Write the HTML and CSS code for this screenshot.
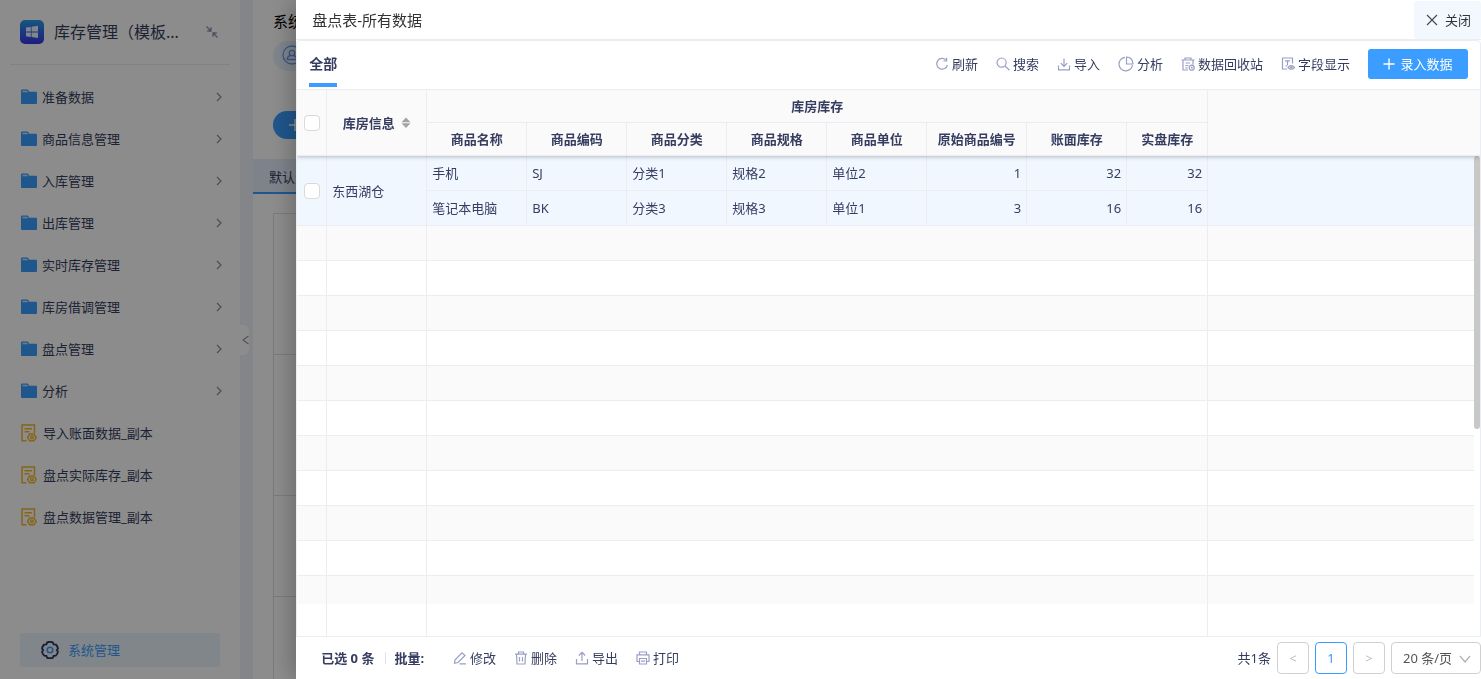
FILE: index.html
```html
<!DOCTYPE html>
<html lang="zh-CN">
<head>
<meta charset="utf-8">
<title>库存管理</title>
<link rel="stylesheet" href="styles.css">
</head>
<body>
<svg class="sprite" aria-hidden="true">
  <symbol id="folder" viewBox="0 0 16 16"><path d="M0 1.5Q0 0.5 1 0.5H6.6L8.4 2.8H15Q16 2.8 16 3.8V14Q16 15 15 15H1Q0 15 0 14Z" fill="#3a9dff"/><path d="M1.5 3.3V1.8H6L7.2 3.3Z" fill="#fff" opacity=".75"/></symbol>
  <symbol id="arrow" viewBox="0 0 8 10"><path d="M2 1L6 5L2 9" fill="none" stroke="#898ea5" stroke-width="1.2"/></symbol>
  <symbol id="doc" viewBox="0 0 16 18"><g fill="none" stroke="#f4b92c" stroke-width="1.5"><path d="M5.5 16.8H1V1H13.5V9"/><path d="M3.5 4.8H11M3.5 7.8H8.5"/><path d="M8.6 10H13L15.2 13.4L13 16.8H8.6L6.6 13.4Z"/><circle cx="10.9" cy="13.4" r="1.3"/></g></symbol>
</svg>
<div class="app">
  <aside class="sidebar">
    <header class="brand">
      <svg class="logo" viewBox="0 0 24 24"><defs><linearGradient id="g" x1="0" y1="0" x2="0" y2="1"><stop offset="0" stop-color="#279fe6"/><stop offset="1" stop-color="#3a33e8"/></linearGradient></defs><rect width="24" height="24" rx="5" fill="url(#g)"/><path d="M6 7.6L10.8 6.9V11.5H6ZM11.6 6.8L18 5.8V11.5H11.6ZM6 12.4H10.8V17L6 16.3ZM11.6 12.4H18V18L11.6 17.1Z" fill="#eef2ff"/></svg>
      <h1>库存管理（模板...</h1>
      <svg class="shrink" viewBox="0 0 12 12"><g fill="none" stroke="#8f93ac" stroke-width="1.3"><path d="M0.5 0.5L5 5M5 1.2V5H1.2M11.5 11.5L7 7M7 10.8V7H10.8"/></g></svg>
    </header>
    <nav class="menu">
      <a href="#"><svg class="folder"><use href="#folder"/></svg><span>准备数据</span><svg class="arrow"><use href="#arrow"/></svg></a>
      <a href="#"><svg class="folder"><use href="#folder"/></svg><span>商品信息管理</span><svg class="arrow"><use href="#arrow"/></svg></a>
      <a href="#"><svg class="folder"><use href="#folder"/></svg><span>入库管理</span><svg class="arrow"><use href="#arrow"/></svg></a>
      <a href="#"><svg class="folder"><use href="#folder"/></svg><span>出库管理</span><svg class="arrow"><use href="#arrow"/></svg></a>
      <a href="#"><svg class="folder"><use href="#folder"/></svg><span>实时库存管理</span><svg class="arrow"><use href="#arrow"/></svg></a>
      <a href="#"><svg class="folder"><use href="#folder"/></svg><span>库房借调管理</span><svg class="arrow"><use href="#arrow"/></svg></a>
      <a href="#"><svg class="folder"><use href="#folder"/></svg><span>盘点管理</span><svg class="arrow"><use href="#arrow"/></svg></a>
      <a href="#"><svg class="folder"><use href="#folder"/></svg><span>分析</span><svg class="arrow"><use href="#arrow"/></svg></a>
      <a href="#"><svg class="doc"><use href="#doc"/></svg><span>导入账面数据_副本</span></a>
      <a href="#"><svg class="doc"><use href="#doc"/></svg><span>盘点实际库存_副本</span></a>
      <a href="#"><svg class="doc"><use href="#doc"/></svg><span>盘点数据管理_副本</span></a>
    </nav>
    <a class="system" href="#"><svg viewBox="0 0 18 18"><path d="M6.2 1.3Q9 0.4 11.8 1.3L12.6 3.3L14.9 3.5Q16.6 5.2 17 7.6L15.8 9L17 10.6Q16.5 13 14.8 14.6L12.6 14.8L11.8 16.8Q9 17.6 6.2 16.8L5.4 14.8L3.2 14.6Q1.5 13 1 10.6L2.2 9L1 7.6Q1.4 5.2 3.1 3.5L5.4 3.3Z" fill="none" stroke="#303658" stroke-width="1.8"/><circle cx="9" cy="9" r="2.8" fill="none" stroke="#3a9dff" stroke-width="1.6"/></svg>系统管理</a>
  </aside>
  <div class="gutter"><button class="collapse" aria-label="收起"><svg viewBox="0 0 7 10"><path d="M6.5 1L1 5L6.5 9" fill="none" stroke="#999" stroke-width="1.2"/></svg></button></div>
  <main class="page">
    <div class="page-head">
      <h2>系统</h2>
      <div class="user"><svg viewBox="0 0 20 20"><g fill="none" stroke="#6a9df0" stroke-width="1.3"><circle cx="10" cy="10" r="9"/><circle cx="10" cy="8" r="2.7"/><path d="M5 14.5Q5.5 11 8.5 10.5M15 14.5Q14.5 11 11.5 10.5M5 14.5H15"/></g></svg></div>
      <button class="add" aria-label="新增"><svg viewBox="0 0 12 12"><path d="M0 6H12M6 0V12" stroke="#fff" stroke-width="1.5"/></svg></button>
    </div>
    <div class="page-tab">默认分</div>
    <div class="cards"><i></i><i></i><i class="short"></i><i></i></div>
  </main>
</div>
<div class="mask"></div>

<section class="drawer" role="dialog" aria-label="盘点表-所有数据">
  <header class="drawer-head">
    <h2>盘点表-所有数据</h2>
    <button class="close"><svg viewBox="0 0 12 12"><path d="M1 1L11 11M11 1L1 11" stroke="#444" stroke-width="1.1"/></svg>关闭</button>
  </header>
  <div class="panel">
    <div class="toolbar">
      <button class="tab">全部</button>
      <div class="tools">
        <button><svg viewBox="0 0 14 14"><path d="M10.8 2.8A5.4 5.4 0 1 0 12.4 8M11.6 0.8V4H8.4"/></svg>刷新</button>
        <button><svg viewBox="0 0 14 14"><circle cx="5.6" cy="5.6" r="4.6"/><path d="M9 9L13.5 13.3"/></svg>搜索</button>
        <button><svg viewBox="0 0 14 14"><path d="M7 1.5V9M3.8 6.2L7 9.4L10.2 6.2M1.5 8.5V12.8H12.5V8.5"/></svg>导入</button>
        <button><svg class="i16" viewBox="0 0 16 16"><path d="M7 1.3A6.8 6.8 0 1 0 14.5 9"/><path d="M8.5 1H9A6 6 0 0 1 14.8 6.8V8H8.5Z"/></svg>分析</button>
        <button><svg viewBox="0 0 14 14"><path d="M0.5 3H13.5M4 3V1H10V3M2 3V13H7M12 3V7.5M4.5 6H9M4.5 8.5H7.5M4.5 10.8H6.5"/><circle cx="10.7" cy="10.7" r="2.5"/><path d="M10.7 9.6V10.8H11.8"/></svg>数据回收站</button>
        <button><svg viewBox="0 0 14 14"><path d="M6 12H1.5V1H11.5V6.5M4 3.8H9M6.5 3.8V8.5M4.5 9H6"/><path d="M7 10.5Q10.3 6.8 13.5 10.5Q10.3 14 7 10.5Z"/><circle cx="10.3" cy="10.5" r="0.7"/></svg>字段显示</button>
      </div>
      <button class="primary"><svg viewBox="0 0 12 12"><path d="M0.5 6H11.5M6 0.5V11.5"/></svg>录入数据</button>
    </div>
    <div class="grid">
      <table>
        <colgroup><col class="c-check"><col class="c"><col class="c"><col class="c"><col class="c"><col class="c"><col class="c"><col class="c"><col class="c"><col class="c-last"><col><col class="c-bar"></colgroup>
        <thead>
          <tr><th rowspan="2"><input type="checkbox" aria-label="全选"></th><th rowspan="2"><span class="sort">库房信息<svg viewBox="0 0 10 12"><path d="M5 0.5L9.5 5.2H0.5ZM5 11L9.5 6.3H0.5Z" fill="#a3a3a3"/></svg></span></th><th colspan="8">库房库存</th><th rowspan="2" colspan="2" class="blank"></th></tr>
          <tr><th>商品名称</th><th>商品编码</th><th>商品分类</th><th>商品规格</th><th>商品单位</th><th>原始商品编号</th><th>账面库存</th><th>实盘库存</th></tr>
        </thead>
        <tbody>
          <tr class="data"><td rowspan="2" class="center"><input type="checkbox" aria-label="选择 东西湖仓"></td><td rowspan="2">东西湖仓</td><td>手机</td><td>SJ</td><td>分类1</td><td>规格2</td><td>单位2</td><td class="num">1</td><td class="num">32</td><td class="num">32</td><td rowspan="2" class="blank"></td><td rowspan="2" class="bar"></td></tr>
          <tr class="data"><td>笔记本电脑</td><td>BK</td><td>分类3</td><td>规格3</td><td>单位1</td><td class="num">3</td><td class="num">16</td><td class="num">16</td></tr>
          <tr class="odd"><td></td><td></td><td colspan="8"></td><td class="blank"></td><td class="bar"></td></tr>
          <tr><td></td><td></td><td colspan="8"></td><td class="blank"></td><td class="bar"></td></tr>
          <tr class="odd"><td></td><td></td><td colspan="8"></td><td class="blank"></td><td class="bar"></td></tr>
          <tr><td></td><td></td><td colspan="8"></td><td class="blank"></td><td class="bar"></td></tr>
          <tr class="odd"><td></td><td></td><td colspan="8"></td><td class="blank"></td><td class="bar"></td></tr>
          <tr><td></td><td></td><td colspan="8"></td><td class="blank"></td><td class="bar"></td></tr>
          <tr class="odd"><td></td><td></td><td colspan="8"></td><td class="blank"></td><td class="bar"></td></tr>
          <tr><td></td><td></td><td colspan="8"></td><td class="blank"></td><td class="bar"></td></tr>
          <tr class="odd"><td></td><td></td><td colspan="8"></td><td class="blank"></td><td class="bar"></td></tr>
          <tr><td></td><td></td><td colspan="8"></td><td class="blank"></td><td class="bar"></td></tr>
          <tr class="odd partial"><td></td><td></td><td colspan="8"></td><td class="blank"></td><td class="bar"></td></tr>
          <tr class="rest"><td></td><td></td><td colspan="8"></td><td class="blank"></td><td class="bar"></td></tr>
        </tbody>
      </table>
      <div class="thumb"></div>
    </div>
  </div>
  <footer class="drawer-foot">
    <strong class="picked">已选 0 条</strong>
    <strong class="batch">批量:</strong>
    <div class="tools">
      <button><svg viewBox="0 0 14 14"><path d="M2 9L9 1.8L12 4.5L5 11.5L1.5 12.3ZM6.5 12.8H13"/></svg>修改</button>
      <button><svg viewBox="0 0 14 14"><path d="M1 3.2H13M4.5 3V1H9.5V3M2.5 3.2L3 13H11L11.5 3.2M5.5 6V10.5M8.5 6V10.5"/></svg>删除</button>
      <button><svg viewBox="0 0 14 14"><path d="M7 10V1.5M3.8 4.5L7 1.3L10.2 4.5M1.5 8V12.8H12.5V8"/></svg>导出</button>
      <button><svg viewBox="0 0 14 14"><path d="M3.5 3.8V1H10.5V3.8M3.5 10.5H1V3.8H13V10.5H10.5M3.5 7.5H10.5V13H3.5ZM5 10.2H9"/></svg>打印</button>
    </div>
    <div class="pager">
      <span>共1条</span>
      <button disabled>&lt;</button>
      <button class="on">1</button>
      <button disabled>&gt;</button>
      <div class="size"><select aria-label="每页条数"><option>20 条/页</option></select><svg viewBox="0 0 12 8"><path d="M1 1L6 7L11 1" fill="none" stroke="#b0b0b0" stroke-width="1.2"/></svg></div>
    </div>
  </footer>
</section>
</body>
</html>
```
FILE: styles.css
```css
* { box-sizing: border-box; }
body {
  margin: 0;
  height: 100vh;
  overflow: hidden;
  font: 13px/20px "Noto Sans", "Noto Sans CJK SC", sans-serif;
  color: #363d60;
}
h1, h2 { margin: 0; font-weight: 400; }
a { color: inherit; text-decoration: none; }
button {
  font: inherit;
  color: inherit;
  border: 0;
  padding: 0;
  background: none;
}
svg { display: block; flex: none; }
.sprite { position: absolute; width: 0; height: 0; }

/* Background application */
.app { display: flex; height: 100%; background: #fff; }
.sidebar { width: 240px; flex: none; display: flex; flex-direction: column; }
.brand {
  display: flex;
  align-items: center;
  margin: 0 10px;
  padding: 0 10px;
  height: 65px;
  border-bottom: 1px solid #ebedf2;
}
.brand h1 { font-size: 16px; margin-left: 10px; flex: 1; white-space: nowrap; }
.logo { width: 24px; height: 24px; }
.shrink { width: 12px; height: 12px; margin-right: 2px; }
.menu { flex: 1; padding-top: 11px; }
.menu a { display: flex; align-items: center; height: 42px; padding: 0 17px 0 21px; }
.menu span { flex: 1; }
.folder { width: 16px; height: 16px; margin-right: 5px; }
.doc { width: 16px; height: 18px; margin-right: 6px; }
.arrow { width: 8px; height: 10px; }
.system {
  display: flex;
  align-items: center;
  gap: 9px;
  height: 34px;
  margin: 0 20px 12px;
  padding-left: 21px;
  border-radius: 3px;
  background: #ebf5fe;
  color: #3a9dff;
}
.system svg { width: 18px; height: 18px; }
.gutter {
  flex: none;
  width: 13px;
  display: flex;
  align-items: center;
  background: #eff2fa;
}
.collapse {
  width: 9px;
  height: 30px;
  background: #fff;
  border-radius: 0 6px 6px 0;
  display: flex;
  align-items: center;
  justify-content: flex-end;
}
.collapse svg { width: 7px; height: 10px; }
.page { flex: 1; min-width: 0; overflow: hidden; }
.page-head { padding: 10px 20px 0; }
.page-head h2 { font-size: 15px; line-height: 22px; color: #000; }
.user {
  width: 160px;
  height: 30px;
  margin-top: 9px;
  padding: 4px 9px;
  border-radius: 15px;
  background: #e8f2fe;
}
.user svg { width: 20px; height: 20px; }
.add {
  display: flex;
  align-items: center;
  width: 110px;
  height: 28px;
  margin: 40px 0 20px;
  padding-left: 16px;
  border-radius: 14px;
  background: #3a9dff;
}
.add svg { width: 12px; height: 12px; }
.page-tab {
  height: 35px;
  padding: 8px 16px;
  background: #e6effd;
  border-bottom: 2px solid #3a9dff;
}
.cards { margin: 19px 0 0 20px; border: 1px solid #e0e0e0; }
.cards i { display: block; height: 141px; border-bottom: 1px solid #e0e0e0; }
.cards .short { height: 101px; }
.mask { position: fixed; inset: 0; background: rgba(0, 0, 0, .45); }

/* Drawer */
.drawer {
  position: fixed;
  top: 0;
  right: 0;
  bottom: 0;
  width: 80%;
  display: flex;
  flex-direction: column;
  background: #fff;
  box-shadow: -6px 0 20px rgba(0, 0, 0, .22);
}
.drawer-head {
  display: flex;
  justify-content: space-between;
  align-items: center;
  height: 40px;
  padding-left: 16px;
  border-bottom: 1px solid #ebedf2;
}
.drawer-head h2 { font-size: 15px; color: #333; }
.close {
  display: flex;
  align-items: center;
  gap: 7px;
  height: 38px;
  padding: 0 10px 0 12px;
  border-radius: 3px;
  background: #f3f8ff;
  color: #333;
}
.close svg { width: 12px; height: 12px; }
.panel {
  flex: 1;
  min-height: 0;
  display: flex;
  flex-direction: column;
  border: 1px solid #ebedf2;
  border-radius: 4px 4px 0 0;
}
.toolbar {
  display: flex;
  align-items: center;
  height: 49px;
  flex: none;
  padding: 0 12px 2px;
  border-bottom: 1px solid #ebedf2;
}
.tab {
  height: 46px;
  padding-top: 3px;
  border-bottom: 4px solid #3a9dff;
  font-size: 14px;
  font-weight: 700;
}
.tools { display: flex; gap: 18px; }
.tools button { display: flex; align-items: center; gap: 3px; }
.tools svg, .primary svg {
  width: 14px;
  height: 14px;
  fill: none;
  stroke: #9a9fc4;
  stroke-width: 1.2;
}
.tools .i16 { width: 16px; height: 16px; }
.toolbar .tools { margin-left: auto; }
.primary {
  display: flex;
  align-items: center;
  justify-content: center;
  gap: 5px;
  width: 100px;
  height: 30px;
  margin-left: 18px;
  border-radius: 3px;
  background: #3a9dff;
  color: #fff;
}
.primary svg { width: 12px; height: 12px; stroke: #fff; stroke-width: 1.4; }

/* Data table */
.grid { position: relative; flex: 1; min-height: 0; overflow: hidden; }
table { width: 100%; height: 100%; table-layout: fixed; border-spacing: 0; }
.c-check { width: 30px; }
.c { width: 100px; }
.c-last { width: 81px; }
.c-bar { width: 6px; }
th, td {
  padding: 0;
  border-right: 1px solid #ebedf2;
  border-bottom: 1px solid #ebedf2;
}
thead { position: relative; z-index: 1; box-shadow: 0 1px 4px rgba(0, 0, 0, .25); }
th { height: 33px; background: #fafafa; font-weight: 700; }
td { height: 35px; padding: 0 5px; text-align: left; }
th.blank, td.blank { border-right: 0; }
td.bar { border: 0; padding: 0; }
.center { text-align: center; padding: 0; }
.num { text-align: right; }
.data td { background: #f0f7ff; }
.data .bar { background: #fff; }
.odd td { background: #fafafa; }
.odd .bar { background: #fff; }
.partial td { height: 28px; border-bottom: 0; }
.rest td { height: auto; border-bottom: 0; }
.sort { display: flex; align-items: center; justify-content: center; gap: 6px; }
.sort svg { width: 10px; height: 12px; }
input[type="checkbox"] {
  appearance: none;
  display: block;
  width: 16px;
  height: 16px;
  margin: 0 auto;
  border: 1px solid #d9d9d9;
  border-radius: 4px;
  background: #fff;
}
.thumb {
  position: absolute;
  top: 66px;
  right: 0;
  width: 6px;
  height: 273px;
  border-radius: 3px;
  background: #c8c8c8;
}

/* Footer */
.drawer-foot { display: flex; align-items: center; height: 42px; padding-left: 25px; flex: none; }
.picked { border-right: 1px solid #dfe2ea; padding-right: 11px; line-height: 12px; }
.batch { margin: 0 29px 0 8px; }
.pager { display: flex; align-items: center; gap: 6px; margin-left: auto; }
.pager button {
  width: 32px;
  height: 32px;
  border: 1px solid #d0d0d0;
  border-radius: 4px;
  background: #fff;
}
.pager button:disabled { color: #bfbfbf; }
.pager .on { border-color: #3a9dff; color: #3a9dff; }
.size { position: relative; }
.size select {
  appearance: none;
  width: 90px;
  height: 32px;
  padding: 0 11px;
  border: 1px solid #d0d0d0;
  border-radius: 4px;
  background: #fff;
  font: inherit;
  color: #555;
}
.size svg { position: absolute; right: 10px; top: 13px; width: 12px; height: 8px; pointer-events: none; }
```
